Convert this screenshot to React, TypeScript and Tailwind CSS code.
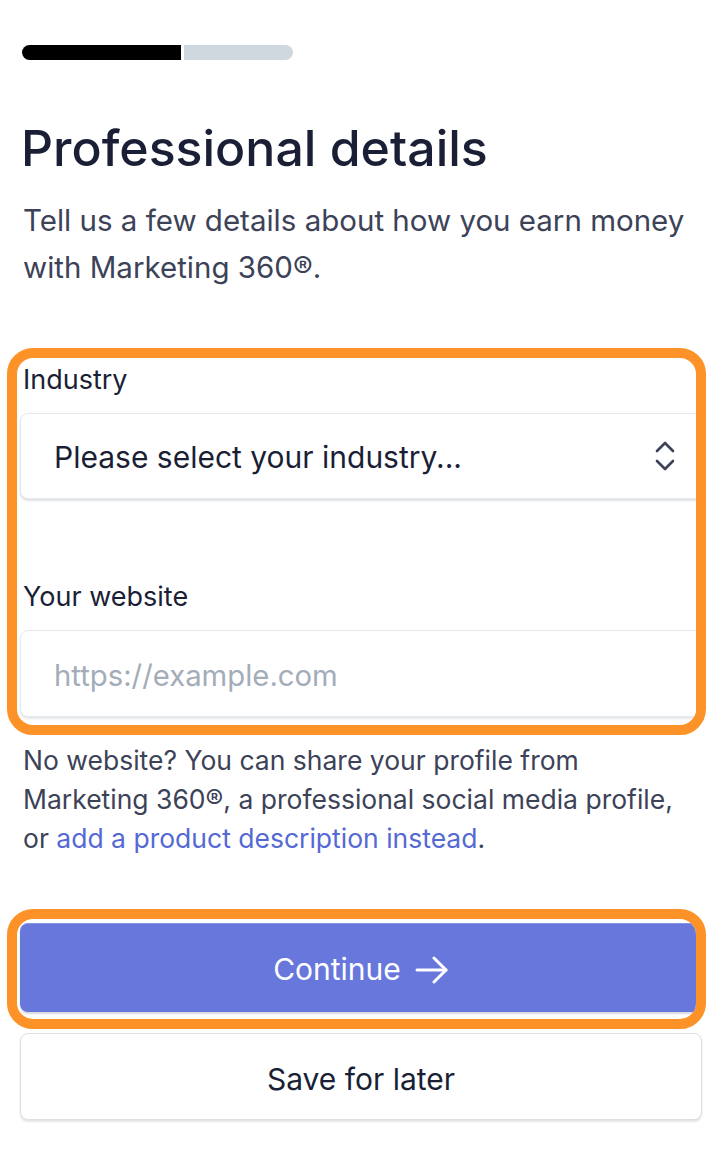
import React from "react";

function UpDown() {
  return (
    <svg width="22" height="32" viewBox="0 0 22 32" fill="none" stroke="#3c4257" strokeWidth="2.6" strokeLinecap="round" strokeLinejoin="round">
      <path d="M3 11 L11 3 L19 11" />
      <path d="M3 21 L11 29 L19 21" />
    </svg>
  );
}

function Arrow() {
  return (
    <svg width="34" height="28" viewBox="0 0 34 28" fill="none" stroke="#ffffff" strokeWidth="3" strokeLinecap="round" strokeLinejoin="round">
      <path d="M2 14 H31" />
      <path d="M19 2 L31 14 L19 26" />
    </svg>
  );
}

export default function App() {
  return (
    <div
      className="w-[708px] h-[1152px] bg-white flex flex-col overflow-hidden"
      style={{ fontFamily: "Inter, 'Noto Sans', sans-serif" }}
    >
      {/* progress */}
      <div className="ml-[22px] mt-[45px] flex gap-[3px] h-[15px]">
        <div className="w-[159px] h-full bg-black rounded-l-full" />
        <div className="w-[109px] h-full bg-[#cfd7df] rounded-r-full" />
      </div>

      <h1 className="ml-[21px] mt-[60px] text-[50px] leading-[56px] font-medium text-[#1a1f36]">
        Professional details
      </h1>
      <p className="ml-[23px] mt-[21px] text-[29.5px] leading-[47px] text-[#3c4257]">
        Tell us a few details about how you earn money
        <br />
        with Marketing 360®.
      </p>

      {/* Orange highlight 1 */}
      <div className="ml-[7px] mt-[57px] w-[699px] border-[10px] border-[#fd9328] rounded-[26px] overflow-hidden">
        <div className="pl-[3px] pt-[6px] pb-[8px]">
          <div className="ml-[3px] text-[27px] leading-[32px] text-[#1a1f36]">Industry</div>
          <div className="mt-[17px] w-[682px] h-[86px] rounded-[8px] border border-[#e3e8ee] shadow-[0_2px_2px_rgba(60,66,87,0.16)] bg-white flex items-center pl-[33px] pr-[25px]">
            <span className="flex-1 pt-[2px] text-[30px] text-[#1a1f36]">Please select your industry...</span>
            <UpDown />
          </div>
          <div className="ml-[3px] mt-[82px] text-[27px] leading-[32px] text-[#1a1f36]">Your website</div>
          <div className="mt-[17px] w-[682px] h-[87px] rounded-[8px] border border-[#e3e8ee] shadow-[0_2px_2px_rgba(60,66,87,0.12)] bg-white flex items-center pl-[33px]">
            <span className="pt-[4px] text-[29.3px] text-[#a3acb9]">https://example.com</span>
          </div>
        </div>
      </div>

      <p className="ml-[23px] mt-[6px] text-[26.5px] leading-[39px] text-[#3c4257]">
        No website? You can share your profile from
        <br />
        Marketing 360®, a professional social media profile,
        <br />
        or <span className="text-[#5469d4]">add a product description instead</span>.
      </p>

      {/* Orange highlight 2 */}
      <div className="ml-[7px] mt-[51px] w-[699px] border-[10px] border-[#fd9328] rounded-[26px] overflow-hidden">
        <div className="pl-[3px] pt-[4px] pb-[7px]">
          <div className="w-[682px] h-[89px] rounded-[8px] bg-[#6777dc] border-t border-[#8595ea] shadow-[0_2px_2px_rgba(60,66,87,0.2)] flex items-center justify-center gap-[14px] pt-[3px]">
            <span className="text-[30px] text-white">Continue</span>
            <Arrow />
          </div>
        </div>
      </div>

      <div className="ml-[20px] mt-[4px] w-[682px] h-[87px] rounded-[8px] border border-[#dcdfe4] shadow-[0_2px_2px_rgba(60,66,87,0.14)] bg-white flex items-center justify-center pt-[5px]">
        <span className="text-[30px] text-[#1a1f36]">Save for later</span>
      </div>
    </div>
  );
}
